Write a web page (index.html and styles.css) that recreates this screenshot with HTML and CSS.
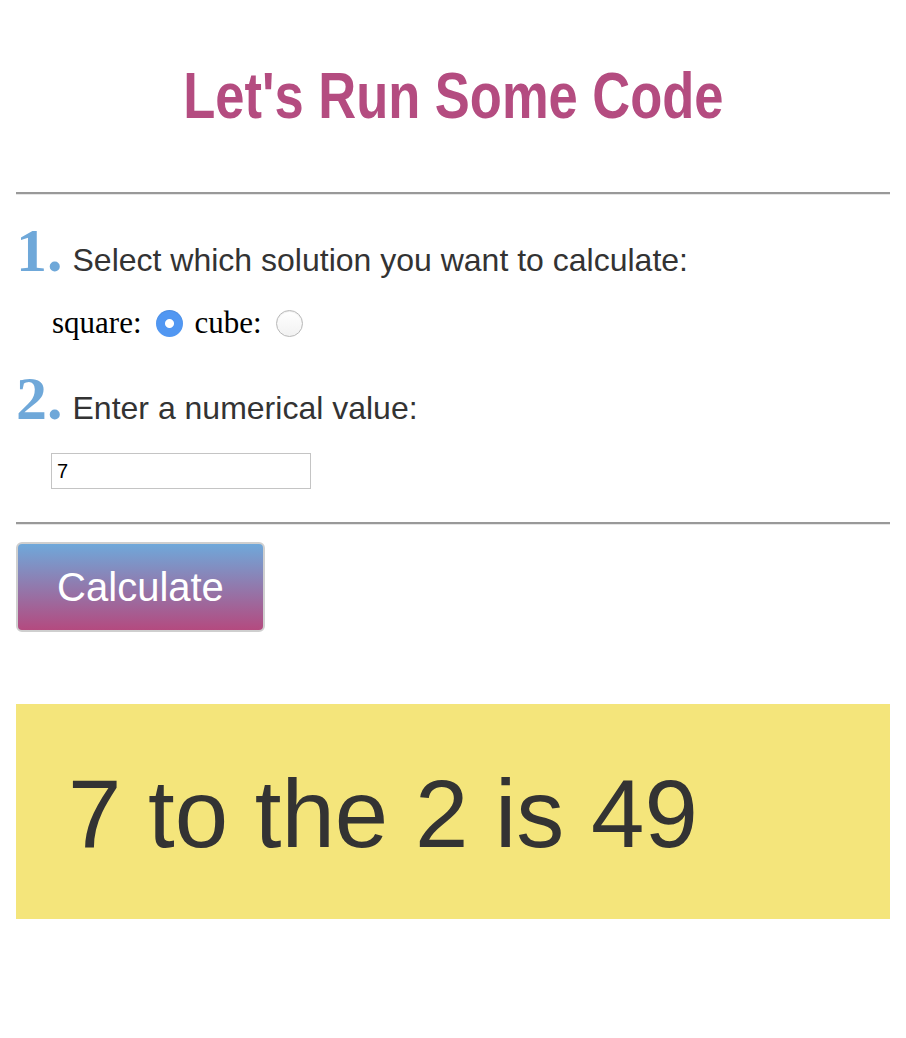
FILE: index.html
```html
<!DOCTYPE html>
<html lang="en">
<head>
<meta charset="utf-8">
<title>Let's Run Some Code</title>
<link rel="stylesheet" href="styles.css">
</head>
<body>
<h1 class="title"><span class="title-text">Let's Run Some Code</span></h1>
<hr class="rule">
<div class="step">
  <span class="num">1.</span>
  <span class="step-text">Select which solution you want to calculate:</span>
</div>
<div class="options">
  <label class="opt">square: <span class="radio checked"></span></label>
  <label class="opt">cube: <span class="radio"></span></label>
</div>
<div class="step step-two">
  <span class="num">2.</span>
  <span class="step-text">Enter a numerical value:</span>
</div>
<div class="field">
  <input class="value" type="text" value="7">
</div>
<hr class="rule rule-two">
<button class="calc">Calculate</button>
<div class="result">7 to the 2 is 49</div>
</body>
</html>
```
FILE: styles.css
```css
html, body {
  margin: 0;
  padding: 0;
  background: #fff;
}
body {
  padding: 0 16px;
  font-family: "Liberation Sans", Arial, sans-serif;
  color: #333;
}
.title {
  margin: 0;
  padding-top: 64px;
  text-align: center;
  font-family: "Liberation Sans", Arial, sans-serif;
  font-weight: bold;
  font-size: 64px;
  line-height: 64px;
  color: #b44c80;
}
.title-text {
  display: inline-block;
  transform: scaleX(0.82);
}
.rule {
  margin: 64px 0 0;
  height: 0;
  border: 0;
  border-top: 2px solid #999;
  border-bottom: 1px solid #e6e6e6;
}
.step {
  display: flex;
  align-items: baseline;
  margin-top: 25px;
  line-height: 60px;
}
.num {
  font-family: "Liberation Serif", "Times New Roman", serif;
  font-weight: bold;
  font-size: 62px;
  color: #6fa8d9;
  margin-right: 10px;
}
.step-text {
  font-size: 32px;
  color: #333;
}
.options {
  display: flex;
  align-items: center;
  margin-top: 13px;
  padding-left: 36px;
  height: 40px;
  font-family: "Liberation Serif", "Times New Roman", serif;
  font-size: 31px;
  color: #000;
}
.opt {
  display: flex;
  align-items: center;
  margin-right: 12px;
}
.radio {
  display: inline-block;
  box-sizing: border-box;
  width: 27px;
  height: 27px;
  margin-left: 14px;
  border-radius: 50%;
  border: 1px solid #b8b8b8;
  background: linear-gradient(#fff, #f2f2f2);
  box-shadow: inset 0 1px 1px rgba(0,0,0,0.08);
}
.radio.checked {
  border: 0;
  background: radial-gradient(circle, #fff 0 4px, #5197f2 5px);
}
.step-two {
  margin-top: 25px;
}
.field {
  margin-top: 15px;
  padding-left: 35px;
}
.value {
  display: block;
  box-sizing: border-box;
  width: 260px;
  height: 36px;
  margin: 0;
  padding: 0 5px;
  border: 1px solid #c4c4c4;
  font-family: "Liberation Sans", Arial, sans-serif;
  font-size: 20px;
  color: #000;
  outline: none;
}
.rule-two {
  margin-top: 33px;
}
.calc {
  display: block;
  box-sizing: border-box;
  margin-top: 17px;
  width: 249px;
  height: 90px;
  padding: 0;
  border: 2px solid #cfcfcf;
  border-radius: 6px;
  background: linear-gradient(#6fa8da, #b44a7f);
  color: #fff;
  font-family: "Liberation Sans", Arial, sans-serif;
  font-size: 40px;
  cursor: pointer;
}
.result {
  margin-top: 72px;
  padding: 62px 52px 57px;
  background: #f4e57b;
  font-size: 96px;
  line-height: 96px;
  color: #333;
}
```
